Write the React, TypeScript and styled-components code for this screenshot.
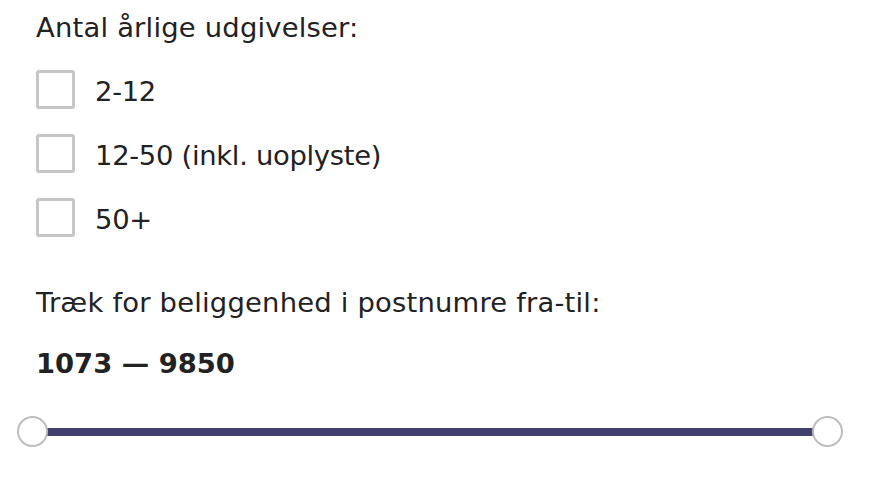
import React from "react";
import styled, { createGlobalStyle } from "styled-components";

const Global = createGlobalStyle`
  html, body { margin: 0; padding: 0; background: #ffffff; }
  body { font-family: "DejaVu Sans", "Noto Sans", sans-serif; color: #222222; }
`;

const Page = styled.div`
  display: flex;
  flex-direction: column;
  padding: 11px 0 0 36px;
  width: 884px;
  box-sizing: border-box;
`;

const Heading = styled.div`
  font-size: 27.4px;
  line-height: 34px;
  font-weight: 400;
  letter-spacing: 0.2px;
`;

const Options = styled.div`
  display: flex;
  flex-direction: column;
  gap: 25px;
  margin-top: 24.5px;
`;

const OptionRow = styled.label`
  display: flex;
  align-items: center;
  gap: 20px;
  height: 39px;
  cursor: pointer;
`;

const Box = styled.span`
  width: 39px;
  height: 39px;
  box-sizing: border-box;
  border: 3px solid #c6c6c6;
  border-radius: 3px;
  background: #ffffff;
  flex: none;
`;

const OptionText = styled.span`
  font-size: 27.4px;
  line-height: 34px;
  padding-top: 6px;
  letter-spacing: -0.3px;
`;

const RangeHeading = styled(Heading)`
  margin-top: 49px;
`;

const RangeValue = styled.div`
  margin-top: 27.5px;
  font-size: 27.4px;
  line-height: 34px;
  font-weight: 700;
`;

const Slider = styled.div`
  position: relative;
  display: flex;
  align-items: center;
  margin: 35px 0 0 -19px;
  width: 826px;
  height: 31px;
`;

const Track = styled.div`
  flex: 1;
  height: 8px;
  margin: 0 15.5px;
  background: #40416e;
`;

const Thumb = styled.span<{ $side: "left" | "right" }>`
  position: absolute;
  top: 0;
  ${(p) => (p.$side === "left" ? "left: 0;" : "right: 0;")}
  width: 31px;
  height: 31px;
  box-sizing: border-box;
  border-radius: 50%;
  border: 2px solid #bdbdbd;
  background: #ffffff;
`;

const options = ["2-12", "12-50 (inkl. uoplyste)", "50+"];

export default function App() {
  return (
    <>
      <Global />
      <Page>
        <Heading>Antal årlige udgivelser:</Heading>
        <Options>
          {options.map((o) => (
            <OptionRow key={o}>
              <Box />
              <OptionText>{o}</OptionText>
            </OptionRow>
          ))}
        </Options>
        <RangeHeading>Træk for beliggenhed i postnumre fra-til:</RangeHeading>
        <RangeValue>1073 — 9850</RangeValue>
        <Slider>
          <Track />
          <Thumb $side="left" />
          <Thumb $side="right" />
        </Slider>
      </Page>
    </>
  );
}
